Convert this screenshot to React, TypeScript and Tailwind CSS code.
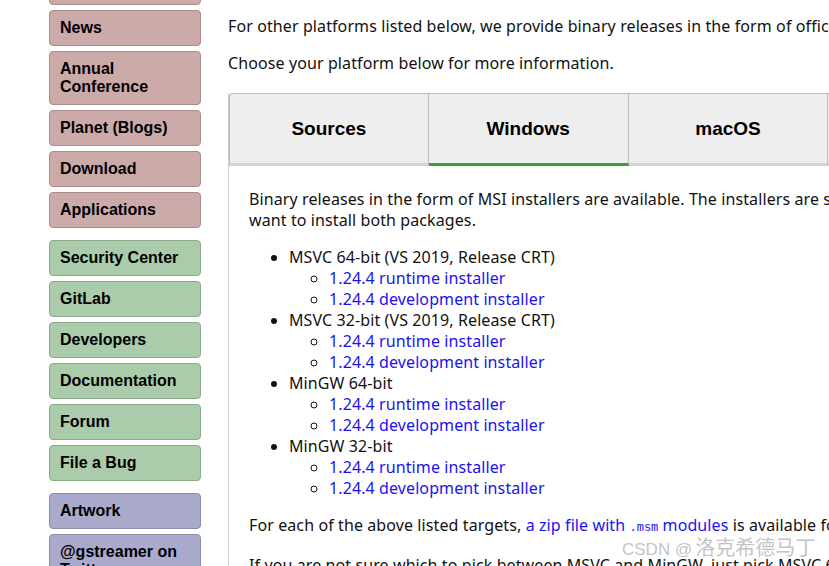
const pink = 'bg-[#ccaaaa] border-[#aa8c8c]'
const green = 'bg-[#aaccaa] border-[#8cab8c]'
const purple = 'bg-[#aaaacc] border-[#8c8cab]'

const groups = [
  { color: pink, items: ['About', 'News', 'Annual Conference', 'Planet (Blogs)', 'Download', 'Applications'] },
  { color: green, items: ['Security Center', 'GitLab', 'Developers', 'Documentation', 'Forum', 'File a Bug'] },
  { color: purple, items: ['Artwork', '@gstreamer on Twitter'] },
]

const targets = ['MSVC 64-bit (VS 2019, Release CRT)', 'MSVC 32-bit (VS 2019, Release CRT)', 'MinGW 64-bit', 'MinGW 32-bit']

function NavButton({ label, color }: { label: string; color: string }) {
  return (
    <a
      href="#"
      className={`block w-[152px] rounded-[4px] border py-[8px] pl-[10px] pr-2 text-[16px] font-bold leading-[18px] text-black ${color}`}
    >
      {label}
    </a>
  )
}

export default function App() {
  const body = { fontFamily: '"Noto Sans", "Open Sans", sans-serif' }
  return (
    <div className="relative h-[566px] w-[829px] overflow-hidden bg-white text-[#111]">
      <div className="flex gap-[27px] pl-[49px]">
        {/* Sidebar */}
        <nav className="-mt-[31px] flex shrink-0 flex-col gap-[12px]" style={{ fontFamily: '"Liberation Sans", Arial, sans-serif' }}>
          {groups.map((g, i) => (
            <div key={i} className="flex flex-col gap-[5px]">
              {g.items.map((item) => (
                <NavButton key={item} label={item} color={g.color} />
              ))}
            </div>
          ))}
        </nav>

        {/* Main content */}
        <main className="w-[1000px] shrink-0 whitespace-nowrap text-[16px] leading-[21px] tracking-[0.1px]" style={body}>
          <p className="mt-[16px]">
            For other platforms listed below, we provide binary releases in the form of official installers or tarballs maintained by the GStreamer project.
          </p>
          <p className="mt-[16px]">Choose your platform below for more information.</p>

          <div className="mt-[19px] border-l border-[#cccccc]">
            <div className="flex" style={{ fontFamily: '"Liberation Sans", Arial, sans-serif' }}>
              {['Sources', 'Windows', 'macOS', 'Linux', 'iOS'].map((t, i) => (
                <div
                  key={t}
                  className={`flex h-[73px] w-[200px] items-center justify-center border-t border-r border-[#bbbbbb] bg-[#eeeeee] text-[19px] font-bold tracking-normal text-black ${i === 0 ? 'rounded-tl-[4px] border-l' : ''} ${t === 'Windows' ? 'border-b-[3px] border-b-[#3d9a3d]' : 'border-b-[3px] border-b-[#d2d2d2]'}`}
                >
                  {t}
                </div>
              ))}
            </div>

            <div className="pl-[20px] pt-[23px]">
              <p>
                Binary releases in the form of MSI installers are available. The installers are split into runtime and development packages. Developers will
                <br />
                want to install both packages.
              </p>
              <ul className="mt-[16px] list-disc pl-[40px]">
                {targets.map((t) => (
                  <li key={t}>
                    {t}
                    <ul className="list-[circle] pl-[40px]">
                      <li>
                        <a href="#" className="text-[#1a12f0]">1.24.4 runtime installer</a>
                      </li>
                      <li>
                        <a href="#" className="text-[#1a12f0]">1.24.4 development installer</a>
                      </li>
                    </ul>
                  </li>
                ))}
              </ul>
              <p className="mt-[16px]">
                For each of the above listed targets,{' '}
                <a href="#" className="text-[#1a12f0]">
                  a zip file with <code className="text-[12px] tracking-normal" style={{ fontFamily: '"Liberation Mono", monospace' }}>.msm</code> modules
                </a>{' '}
                is available for use in WiX-based installers.
              </p>
              <p className="mt-[16px]">
                If you are not sure which to pick between MSVC and MinGW, just pick MSVC 64-bit.
              </p>
            </div>
          </div>
        </main>
      </div>

      {/* CSDN watermark */}
      <div
        className="absolute left-[622px] top-[535px] flex items-baseline gap-[3px] leading-[24px] text-[#c4c4c4]"
        style={{ fontFamily: '"Liberation Sans", "Noto Sans CJK SC", sans-serif', textShadow: '0 0 1px #fff, 0 0 1px #fff' }}
      >
        <span className="text-[17px]">CSDN @</span>
        <span className="text-[20px]" style={{ fontFamily: '"Noto Sans CJK SC", sans-serif' }}>洛克希德马丁</span>
      </div>
    </div>
  )
}
